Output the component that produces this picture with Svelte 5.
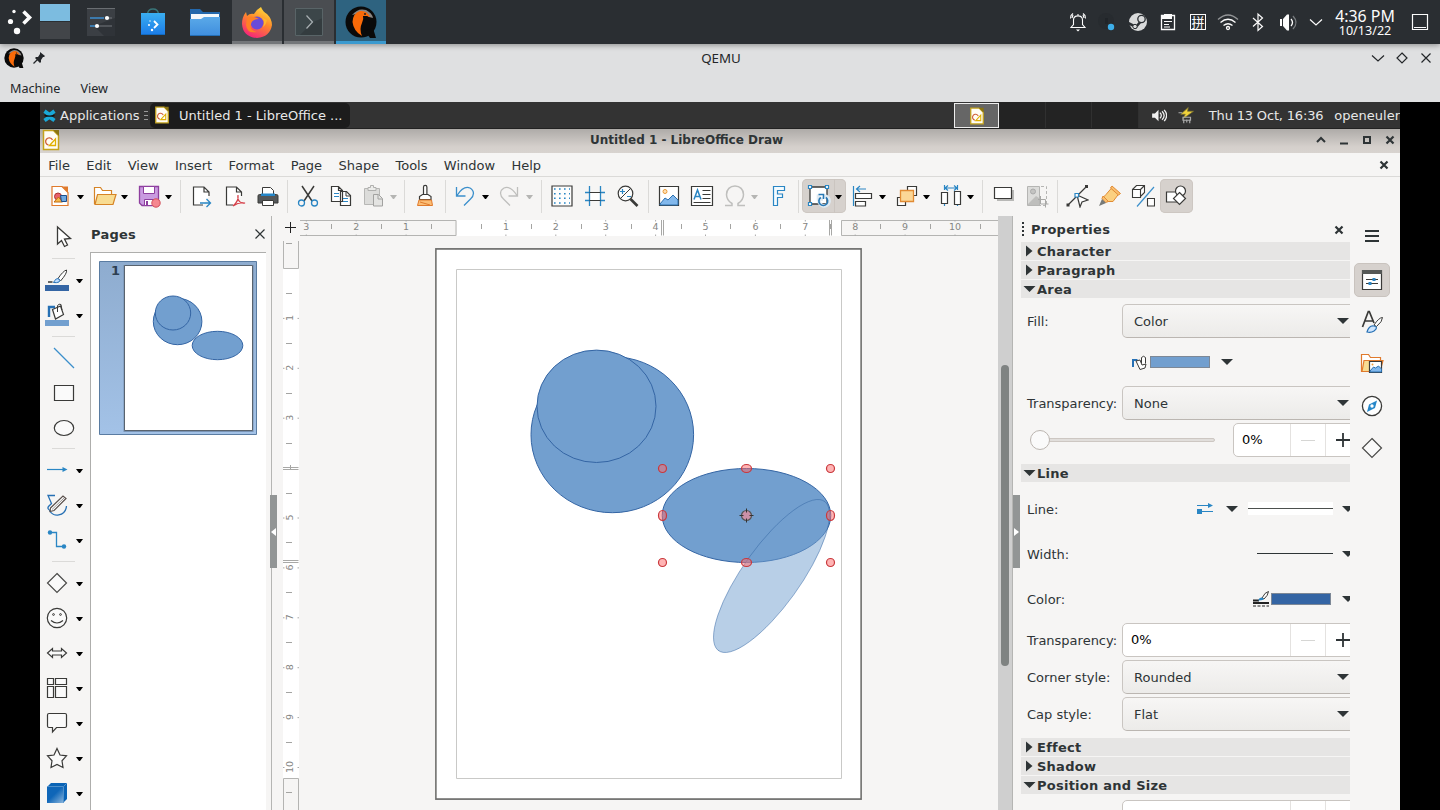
<script>
  const doc = '<path d="M4.500 2.500h10l5 5v14h-15z" fill="#fffdf5" stroke="#c4a21c" stroke-width="1.500"/><path d="M14 2h6v6z" fill="#8a7414"/><path d="M13.500 12a3.600 3.600 0 1 0-4 5" fill="none" stroke="#d0603a" stroke-width="1.300"/><path d="M10.500 17.500l6-6.500v6.500z" fill="none" stroke="#e0b000" stroke-width="1.300"/>';
  const qemu = '<circle cx="16" cy="16" r="15.500" fill="#0a0a0a"/><path d="M20 25l8-3 3 10h-6z" fill="#0a0a0a"/><path d="M7 9Q13 1.500 21 4q6 3 7 8l-4-1-5-5z" fill="#aaa5a0" opacity=".8"/><path d="M25 11Q22 4 15 5 8 7 7.500 16q1 9 9.500 14-3-7 0-13 2-4 1-7l4 0q2 1 3 1z" fill="#f96a08"/><circle cx="20" cy="8" r="1" fill="#222"/>';
  const icons = {
    doc, qemu,
    newdoc: '<path d="M3 2.500h10l6 6v13H3z" fill="#fff" stroke="#e07a2c" stroke-width="1.200"/><path d="M13 2.500h6v6z" fill="#e07a2c"/><circle cx="9" cy="12.500" r="3.500" fill="#e8616b" stroke="#a33" /><path d="M5 18l4.500-5 4 5z" fill="#f6b84c" stroke="#c06a10"/><path d="M11.500 11.500h6v6h-5z" fill="#6ea8e0" stroke="#1f4f8a"/>',
    open: '<path d="M1.500 20V3.500h6l2 3h9v4" fill="#fff" stroke="#d68426" stroke-width="1.200"/><path d="M4.500 10.500h18.500l-3 10H2z" fill="#f8dc92" stroke="#d68426" stroke-width="1.200"/>',
    save: '<path d="M2.500 2.500h19v19H5l-2.500-2.500z" fill="#c99be0" stroke="#8e3f9f" stroke-width="1.300"/><path d="M6.500 2.500h11v7h-11zM7.500 15.500h9v6h-9z" fill="#fff" stroke="#8e3f9f"/><path d="M9 17h2v4H9z" fill="#8e3f9f"/><circle cx="19" cy="19" r="4.200" fill="#f58790" stroke="#d24d58"/>',
    export: '<path d="M19 12V8l-5-5H3.500v18H13M14 3v5h5" fill="#fff" stroke="#3a3a38" stroke-width="1.200"/><path d="M10 19h10.500m-4-4l4 4-4 4" fill="none" stroke="#2a86c4" stroke-width="1.300"/>',
    pdf: '<path d="M18.500 12V8l-5-5H3.500v18H10M13.500 3v5h5" fill="#fff" stroke="#3a3a38" stroke-width="1.200"/><path d="M10 22q6-5 5-11c-1 6 3 9 7 8-5-1-9 1-12 3z" fill="none" stroke="#d6404a" stroke-width="1.200"/>',
    print: '<path d="M6.500 10V3.500h8l3 3V10" fill="#fff" stroke="#3a3a38"/><path d="M3.500 10.500h17q1.500 0 1.500 1.500v7H2v-7q0-1.500 1.500-1.500z" fill="#55585a" stroke="#3a3a38"/><path d="M5 9.500h14v2.500H5z" fill="#2687c9"/><path d="M6.500 16.500h11v5h-11z" fill="#fff" stroke="#3a3a38"/>',
    cut: '<path d="M6 2l10 15M18 2L8 17" stroke="#3a3a38" stroke-width="1.500"/><circle cx="5.500" cy="19" r="3" fill="none" stroke="#2a86c4" stroke-width="1.300"/><circle cx="18.500" cy="19" r="3" fill="none" stroke="#2a86c4" stroke-width="1.300"/>',
    copy: '<path d="M2.500 2.500h7l4 4v11h-11zM9.500 2.500v4h4M11.500 7.500h6l4 4v10h-10z" fill="#fff" stroke="#3a3a38" stroke-width="1.200"/><path d="M17 8v4h4" fill="none" stroke="#3a3a38"/><path d="M5 9.500h5m-5 3h5m4 2h5m-5 3h5" stroke="#2a86c4"/>',
    paste: '<path d="M2.500 4.500h15v16h-15z" fill="#dcdcda" stroke="#b7b7b5"/><path d="M6 6.500v-3h2.500v-2h3v2H14v3z" fill="#ececea" stroke="#b0b0ae"/><path d="M11.500 10.500h5l4 4v7.500h-9z" fill="#e4e4e2" stroke="#a2a2a0"/><path d="M16 11v4h4" fill="none" stroke="#a2a2a0"/>',
    brush: '<path d="M10.500 11V3a1.700 1.700 0 0 1 3.400 0v8" fill="#fff" stroke="#3a3a38" stroke-width="1.200"/><path d="M6.500 15.500v-3l3-2h5.500l3 2v3z" fill="#fff" stroke="#3a3a38" stroke-width="1.200"/><path d="M6 16h12.500l1 5.500H4.500z" fill="#fbbd75" stroke="#e07a2c"/><path d="M7 18l10 3" stroke="#e07a2c"/>',
    undo: '<path d="M3.500 3v9h9M4 11.500C7.500 6 12 2 17 4c5 3 4 8 .5 11l-6.500 6.500" fill="none" stroke="#3b8fcb" stroke-width="1.300"/>',
    redo: '<path d="M20.500 3v9h-9M20 11.500C16.500 6 12 2 7 4c-5 3-4 8-.5 11l6.500 6.500" fill="none" stroke="#bfbfbd" stroke-width="1.300"/>',
    grid: '<path d="M2 2h20v20H2z" fill="#fdfdfd" stroke="#3a3a38" stroke-width="1.200"/><g stroke="#2a86c4" stroke-width="1.600" stroke-dasharray="1.600 3.400"><path d="M4 5h16M4 9.700h16M4 14.300h16M4 19h16"/></g>',
    guides: '<path d="M6 9h12v7H6z" fill="#fff"/><path d="M6.500 2v20M17.500 2v20M2 8.500h4m12 0h4M2 16.500h4m12 0h4" stroke="#2a86c4" stroke-width="1.300"/><path d="M6.500 8.500h11m-11 8h11" stroke="#3a3a38" stroke-width="1.200"/>',
    zoom: '<circle cx="9.500" cy="9.500" r="7.300" fill="#fdfdfd" stroke="#3a3a38" stroke-width="1.200"/><path d="M4.500 14.500l10-10" stroke="#3a3a38"/><path d="M14.500 15l7 7" stroke="#3a3a38" stroke-width="2.600"/><path d="M4 7.500h5m-2.500-2.500v5m4.500 2.500h4" stroke="#2a86c4" stroke-width="1.200"/>',
    image: '<path d="M2.500 2.500h19v19h-19z" fill="#fff" stroke="#3a3a38" stroke-width="1.200"/><circle cx="8" cy="7.500" r="2" fill="#fde2b8" stroke="#ec9a36"/><path d="M3 20l5-6 3 2 5-5 5 5v5H3z" fill="#82b8ec" stroke="#2a70b0"/>',
    textbox: '<path d="M1.500 2.500h21v19h-21z" fill="#fff" stroke="#3a3a38" stroke-width="1.200"/><path d="M4 15.500L7.500 6l3.500 9.500M5 12.500h5" fill="none" stroke="#2a86c4" stroke-width="1.500"/><path d="M12.500 6.500h8m-8 4h8m-8 4h8m-17 4h17" stroke="#3a3a38"/>',
    omega: '<path d="M2 21.500h7v-2C5 17 3.500 14 3.500 10.500c0-5 3.500-8.500 8.500-8.500s8.500 3.500 8.500 8.500c0 3.500-1.500 6.500-5.500 9v2h7" fill="none" stroke="#bfbfbd" stroke-width="1.500"/>',
    fontwork: '<path d="M6.500 21.500V2.500h11v4h-7V10h5v3.500h-5v8z" fill="#f3fbff" stroke="#2a86c4" stroke-width="1.200"/>',
    rotate: '<path d="M3 3h17v17H3z" fill="#fff" stroke="#3a3a38" stroke-width="1.300"/><g fill="#fff" stroke="#2a86c4" stroke-width="1.200"><path d="M1.500 1.500h3v3h-3zM18.500 1.500h3v3h-3zM1.500 18.500h3v3h-3z"/></g><path d="M11.500 10.500v4.500h4.500M12.500 15a5 5 0 1 0 5-3" fill="none" stroke="#dfeaf2" stroke-width="3.600"/><path d="M11.500 10.500h5v4.500M13.800 13.500a4.400 4.400 0 1 0 5 0" fill="none" stroke="#2878b4" stroke-width="1.600"/>',
    align: '<path d="M2.500 2v20M15 5H5m4-3L5.500 5 9 8" fill="none" stroke="#2a86c4" stroke-width="1.200"/><path d="M4.500 9.500h16v5h-16zM4.500 17.500h10v4.500h-10z" fill="#fff" stroke="#3a3a38" stroke-width="1.200"/>',
    arrange: '<path d="M12.500 6V2.500h9v9H18M6 13.500H2.500v8h8V18" fill="#fff" stroke="#3a3a38" stroke-width="1.200"/><path d="M5.500 6.500h13v11h-13z" fill="#fbd797" stroke="#e18b34" stroke-width="1.300"/>',
    distribute: '<path d="M5.500 1v5M18.500 1v5M5.500 4h13M9 1.500L6 4l3 2.500M15 1.500L18 4l-3 2.500M5.500 20v2m13-2v2" fill="none" stroke="#2a86c4" stroke-width="1.200"/><path d="M2.500 8.500h6v11h-6zM15.500 7.500h6v13h-6z" fill="#fff" stroke="#3a3a38" stroke-width="1.200"/>',
    shadow: '<path d="M5 6h17v11H5z" fill="#b8b8b6"/><path d="M2.500 3.500h17v11h-17z" fill="#fff" stroke="#3a3a38" stroke-width="1.200"/>',
    crop: '<path d="M2.500 2.500h12v19h-12z" fill="#dcdcda" stroke="#b5b5b3"/><path d="M16 2.500h5.500v19H14" fill="none" stroke="#b5b5b3" stroke-dasharray="3 2"/><circle cx="8" cy="7.500" r="2.500" fill="#c3c3c1" stroke="#aaa"/><path d="M3 20l8-8 3 2v7H3z" fill="#bebebc"/><path d="M15.500 12v8h8M13 15.500h7.500v8" fill="none" stroke="#a8a8a6"/>',
    points: '<path d="M3 21L22 2M12 11l3 12 2-5 6-2z" fill="#fff" stroke="#3a3a38" stroke-width="1.200"/><path d="M1.500 19.500h3v3h-3zM20 1h3v3h-3z" fill="#3a3a38"/><path d="M10 9.500h3.500V13H10z" fill="#fff" stroke="#2a86c4" stroke-width="1.200"/>',
    marker: '<path d="M8 10.500l6-7 7 6-6 8-6 0-4-4z" fill="#fbd080" stroke="#e18b34"/><path d="M14 2l8.500 7.500-2 1.500L12.500 4zM5 12l5.500 5.500-3 1L4 14.500z" fill="#fac070" stroke="#e18b34"/><path d="M4 15l4 4-7 3z" fill="#777a78"/>',
    extrusion: '<path d="M1.500 5.500h8v8h-8zM1.500 5.500l4-4h8v7l-4 4M9.500 5.500l4-4M16.500 14.500h7v7.500h-7z" fill="#fff" stroke="#3a3a38" stroke-width="1.100"/><path d="M6 22.500L23 3" stroke="#3b8fcb" stroke-width="1.200"/>',
    drawfn: '<path d="M2.500 8h11v10h-11z" fill="#fff" stroke="#3a3a38" stroke-width="1.200"/><circle cx="16.500" cy="7" r="5" fill="#fff" stroke="#3a3a38" stroke-width="1.200"/><path d="M15.500 8.500l6 6-6 6-6-6z" fill="#fff" stroke="#3a3a38" stroke-width="1.200"/>',
    select: '<path d="M5.500 2v17l4-3.500 3 6 3-1.500-3-6 6-.5z" fill="#fff" stroke="#3a3a38" stroke-width="1.300"/>',
    linecolor: '<path d="M3 14h4.500" stroke="#3a3a38" stroke-width="1.500"/><path d="M13 10.500Q18 3 21.500 2q1 3-6 11z" fill="#fff" stroke="#3a3a38"/><path d="M8.500 14.500q2.500-5 5.500-3.500 1.500 1.500 0 3-2.500 1-5.500.5z" fill="#bcdcff" stroke="#2670b4"/><path d="M0 17h24v6H0z" fill="#3465a4"/>',
    fillcolor: '<path d="M4 14V4h6" fill="none" stroke="#2670b4" stroke-width="2.400"/><path d="M7.500 6.500l8-3.500 3 8.500-8 4.500z" fill="#fff" stroke="#3a3a38" stroke-width="1.200"/><path d="M12.500 9V2.500q1.500-2 3.500-1l1 5.500" fill="none" stroke="#3a3a38"/><path d="M0 17h24v6H0z" fill="#729fcf"/>',
    line: '<path d="M2 2l20 20" stroke="#3b8fcb" stroke-width="1.200"/>',
    rect: '<path d="M2.500 4.500h19v15h-19z" fill="#fafafa" stroke="#3a3a38" stroke-width="1.200"/>',
    ellipse: '<ellipse cx="12" cy="12" rx="9.700" ry="7.500" fill="#fafafa" stroke="#3a3a38" stroke-width="1.200"/>',
    arrow: '<path d="M2 11.500h17" stroke="#2a86c4" stroke-width="1.200"/><path d="M17.500 9l5 2.500-5 2.500z" fill="#2a86c4"/>',
    pen: '<path d="M10 2.500H3l3.500 8-3 3q-1.500 2 1 3.500" fill="none" stroke="#2670b4" stroke-width="1.300"/><path d="M4.500 17c3 8 16 6.500 17-4" fill="none" stroke="#2670b4" stroke-width="1.300"/><path d="M5.500 15L18 3l3 2.500L9 17.500l-4 1z" fill="#fff" stroke="#5a504c" stroke-width="1.200"/><path d="M7 16.500L19 5" stroke="#5a504c" stroke-width=".6"/>',
    connector: '<path d="M5 4.500h6.500v14H19" fill="none" stroke="#2a86c4" stroke-width="1.300"/><circle cx="5" cy="4.500" r="2.200" fill="#2a86c4"/><circle cx="19" cy="18.500" r="2.200" fill="#2a86c4"/>',
    diamond: '<path d="M12 2.500l9.500 9.500-9.500 9.500L2.500 12z" fill="#fafafa" stroke="#4a4a48" stroke-width="1.200"/>',
    smile: '<circle cx="12" cy="12" r="9.700" fill="#fafafa" stroke="#3a3a38" stroke-width="1.200"/><path d="M6 14.500q6 5 12 0" fill="none" stroke="#3a3a38" stroke-width="1.200"/><circle cx="8.500" cy="8.500" r=".9" fill="none" stroke="#3a3a38"/><circle cx="15.500" cy="8.500" r=".9" fill="none" stroke="#3a3a38"/>',
    arrows: '<path d="M2.500 12l5-4.500V10h9V7.500l5 4.500-5 4.500V14h-9v2.500z" fill="#fafafa" stroke="#3a3a38" stroke-width="1.200"/>',
    flow: '<path d="M2.500 2.500h6v6h-6zM10.500 2.500h11v6h-11zM2.500 10.500h6v11h-6zM10.500 10.500h11v11h-11z" fill="#fafafa" stroke="#3a3a38" stroke-width="1.200"/>',
    callout: '<path d="M4 2.500h16q1.500 0 1.500 1.500v11q0 1.500-1.500 1.500h-8.500l-4 4.500v-4.500H4q-1.500 0-1.500-1.500V4q0-1.500 1.500-1.500z" fill="#fafafa" stroke="#3a3a38" stroke-width="1.200"/>',
    star: '<path d="M12 2.500l3 6.500 6.500.8-4.500 5 1 6.700-6-3-6 3 1-6.700-4.500-5L9 9z" fill="#fafafa" stroke="#3a3a38" stroke-width="1.200"/>',
    cube: '<defs><linearGradient id="cg" x1="0" y1="0" x2="1" y2="1"><stop offset=".45" stop-color="#0f66b8"/><stop offset="1" stop-color="#8cb6dc"/></linearGradient></defs><path d="M2 6l4-4h16v16l-4 4H2z" fill="#0a63b5"/><path d="M2 6h16.500v16H2z" fill="url(#cg)"/><path d="M2.500 5.500h16v16M18.500 5.500L22 2" fill="none" stroke="#4e90cb"/>',
    menu: '<path d="M5 7h14M5 12h14M5 17h14" stroke="#2e3436" stroke-width="2"/>',
    props: '<path d="M2.500 2.500h19v19h-19z" fill="#fff" stroke="#3a3a38" stroke-width="1.200"/><path d="M2 2h20v4H2z" fill="#555856"/><path d="M6 11.500h12M6 15.500h12" stroke="#3a3a38"/><path d="M12.500 10h3v3h-3zM8.500 14h3v3h-3z" fill="#2a86c4"/>',
    styles: '<path d="M2.500 17L8.300 1.500h1L14 13M4.500 11h8" fill="none" stroke="#3a3a38" stroke-width="1.700"/><path d="M14 15q5-7.500 8.500-7.500 0 4-6 9z" fill="#fff" stroke="#3a3a38"/><path d="M7 22q2-7 7-6t0 5q-3 2-7 1z" fill="#cfe6ff" stroke="#2670b4" stroke-width="1.200"/>',
    gallery: '<path d="M1.500 20V2.500h7l2 3h10v4" fill="#fff" stroke="#e07a2c" stroke-width="1.200"/><path d="M4 8.500h19l-3 11H2z" fill="#f8dc92" stroke="#e07a2c" stroke-width="1.200"/><path d="M9.500 9.500h12v11h-12z" fill="#fff" stroke="#3a3a38" stroke-width="1.200"/><path d="M10 19l3.500-4 2 1 3-2 3 3v3H10z" fill="#82b8ec" stroke="#2a70b0"/><circle cx="12.500" cy="12.500" r="1" fill="#ec9a36"/>',
    navigator: '<circle cx="12" cy="12" r="9.600" fill="#fff" stroke="#3a3a38" stroke-width="1.300"/><path d="M17 6.500l-2 7.500-8 4 2-7.500z" fill="#2687c9"/><circle cx="12" cy="12" r="1.700" fill="#fff"/>',
    plus: '<path d="M6 12h14M13 5v14" stroke="#2e3436" stroke-width="1.800"/>',
    bell: '<path d="M5 17.500h14l-2.500-3V10c0-5.500-9-5.500-9 0v4.500zM12 5.500V4M6 8l1-3M18 8l-1-3M4.500 8.500l.5-3 2-2M19.500 8.500l-.5-3-2-2" fill="none" stroke="#fcfcfc" stroke-width="1.100"/><path d="M10 19.500h4l-2 2z" fill="#fff"/>',
    dot: '<circle cx="10" cy="11" r="8" fill="#272b2f"/><path d="M9 8h3v6H9z" fill="#202428"/><circle cx="15" cy="17" r="3.200" fill="#3daee9"/>',
    steam: '<circle cx="12" cy="12" r="9" fill="#d9dadb"/><path d="M2 13l8 4 6-7" fill="none" stroke="#2a2e32" stroke-width="2.600"/><circle cx="15.500" cy="9" r="3.700" fill="#d9dadb" stroke="#2a2e32" stroke-width="1.300"/><circle cx="9" cy="16.500" r="2.200" fill="#d9dadb" stroke="#2a2e32"/>',
    clipboard: '<path d="M5.500 5.500h13v14h-13z" fill="none" stroke="#fcfcfc" stroke-width="1.300"/><path d="M8 4h8v5H5V5h3z" fill="#fcfcfc"/><path d="M8 11.500h8m-8 3h5m-5 2.500h6" stroke="#fcfcfc" stroke-width="1.100"/>',
    wifi: '<g fill="none" stroke="#fcfcfc" stroke-width="1.300"><path d="M2 9.500Q12 .5 22 9.500" opacity=".5"/><path d="M4.500 12.500Q12 6 19.500 12.500M7.500 15.500Q12 12 16.500 15.500"/><circle cx="12" cy="18" r="1.500"/></g>',
    bluetooth: '<path d="M7 8l9.500 8.500-4.500 4V4l4.500 4L7 16.500" fill="none" stroke="#fcfcfc" stroke-width="1.200"/>',
    volume: '<path d="M4 9h2v7H4zM7 9l4-4.500h2v16h-2L7 16z" fill="#fcfcfc"/><path d="M15 9q3 3.500 0 7" fill="none" stroke="#fcfcfc" stroke-width="1.300"/><path d="M17 6q6 6.500 0 13" fill="none" stroke="#777b7e" stroke-width="1.300"/>',
    down: '<path d="M6 9.500l6 5.500 6-5.500" fill="none" stroke="currentColor" stroke-width="1.200"/>',
    desk: '<path d="M4.500 4.500h15v15h-15zM6 17.500h12" fill="none" stroke="#fcfcfc" stroke-width="1.200"/>',
    rhomb: '<path d="M12 7l5 5-5 5-5-5z" fill="none" stroke="currentColor" stroke-width="1.200"/>',
    close: '<path d="M7.500 7.500l9 9m0-9l-9 9" stroke="currentColor" stroke-width="1.200"/>',
    closebold: '<path d="M8.500 8.500l7 7m0-7l-7 7" stroke="currentColor" stroke-width="2.200"/>',
    up: '<path d="M8 14l4-4 4 4" fill="none" stroke="currentColor" stroke-width="2"/>',
    minus: '<path d="M8 15.500h8" stroke="currentColor" stroke-width="2"/>',
    max: '<path d="M9 9h6v6H9z" fill="none" stroke="currentColor" stroke-width="2"/>',
    xfce: '<path d="M4 5l7 5h2l7-5M4 20l7-5h2l7 5" fill="none" stroke="#1aa8d8" stroke-width="6"/><path d="M4 10.500q8 3 16 0v2.500l-3 1H7l-3-1z" fill="#101010"/>',
    gvol: '<path d="M3 9h4l5-5v16l-5-5H3z" fill="#f0f0f0"/><path d="M14 8q4 4 0 8M17 6q6 6 0 12M20 4q7 8 0 16" fill="none" stroke="#f0f0f0" stroke-width="1.800"/>',
    power: '<path d="M15 2L5 11h6l-3 6 14-10h-8z" fill="#f2d33b" stroke="#7e7430"/><path d="M8 15h10v4H8zM9 18v5m4-5v4m4-4v5M2 9h5" fill="none" stroke="#aaa" stroke-width="1.600"/>'
  };
  const sep = { sep: 1 };
  const wide = { sep: 1, wide: 1 };
  const toolbar = [
    { i: 'newdoc', a: 1 }, { i: 'open', a: 1 }, { i: 'save', a: 1 }, wide,
    { i: 'export' }, { i: 'pdf' }, { i: 'print' }, sep,
    { i: 'cut' }, { i: 'copy' }, { i: 'paste', a: 1, off: 1 }, sep,
    { i: 'brush' }, sep,
    { i: 'undo', a: 1 }, { i: 'redo', a: 1, off: 1 }, wide,
    { i: 'grid' }, { i: 'guides' }, { i: 'zoom' }, sep,
    { i: 'image' }, { i: 'textbox' }, { i: 'omega', a: 1, off: 1 }, { i: 'fontwork' }, sep,
    { i: 'rotate', a: 1, on: 1 }, { i: 'align', a: 1 }, { i: 'arrange', a: 1 }, { i: 'distribute', a: 1 }, wide,
    { i: 'shadow' }, { i: 'crop' }, sep,
    { i: 'points' }, { i: 'marker' }, { i: 'extrusion' }, { i: 'drawfn', on: 1 }
  ];
  const tools = [
    { i: 'select' }, sep, { i: 'linecolor', a: 1 }, { i: 'fillcolor', a: 1 }, sep,
    { i: 'line' }, { i: 'rect' }, { i: 'ellipse' }, sep,
    { i: 'arrow', a: 1 }, { i: 'pen', a: 1 }, { i: 'connector', a: 1 }, sep,
    { i: 'diamond', a: 1 }, { i: 'smile', a: 1 }, { i: 'arrows', a: 1 }, { i: 'flow', a: 1 },
    { i: 'callout', a: 1 }, { i: 'star', a: 1 }, { i: 'cube', a: 1 }
  ];
  const menus = ['File', 'Edit', 'View', 'Insert', 'Format', 'Page', 'Shape', 'Tools', 'Window', 'Help'];
  const step = 49.9;
  const range = (a, b) => Array.from({ length: b - a + 1 }, (_, k) => a + k);
  const handles = [[662.5, 468.5, 4], [746.5, 468.5, 5], [830.5, 468.5, 4], [662.5, 515.5, 4], [830.5, 515.5, 4], [662.5, 562.5, 4], [746.5, 562.5, 5], [830.5, 562.5, 4]];
</script>

{#snippet icon(name, size = 24, box = 24)}
  <svg width={size} height={size} viewBox="0 0 {box} {box}">{@html icons[name]}</svg>
{/snippet}

{#snippet tri(off)}
  <svg class="tri" class:off width="7" height="4" viewBox="0 0 7 4"><path d="M0 0h7L4 4H3z" /></svg>
{/snippet}

{#snippet caret()}
  <svg class="caret" width="12" height="6" viewBox="0 0 12 6"><path d="M0 0h12L6 6z" /></svg>
{/snippet}

{#snippet section(title, open)}
  <div class="section">
    <svg width="16" height="18" viewBox="0 0 16 18"><path d={open ? 'M2.500 6h12l-6 6z' : 'M5 3.500v11l6.500-5.500z'} /></svg>
    <b>{title}</b>
  </div>
{/snippet}

{#snippet combo(label, value)}
  <div class="row">
    <span class="label">{label}</span>
    <div class="combo"><span>{value}</span>{@render caret()}</div>
  </div>
{/snippet}

{#snippet spinButtons()}
  <i class="spin-minus"></i><i class="spin-plus">{@render icon('plus')}</i>
{/snippet}

<div class="screen">
  <header class="panel">
    <svg width="40" height="44" viewBox="0 0 40 44"><g fill="#fcfcfc"><circle cx="14" cy="11.500" r="1.700" /><circle cx="10.500" cy="21.500" r="2.600" /><circle cx="17" cy="31" r="3.200" /></g><path d="M23.500 11.500l6 6-6 6" fill="none" stroke="#fcfcfc" stroke-width="3.600" /></svg>
    <div class="pager"><i></i><i></i></div>
    <div class="launcher first">
      <svg width="28" height="28" viewBox="0 0 28 28"><path d="M0 0h28v28H0z" fill="#3b3f44" /><path d="M7 18l10 10h11V10z" fill="#24282b" opacity=".5" /><path d="M0 .5h28" stroke="#6a6e72" /><path d="M3 10h14M3 18h5" stroke="#3e8ed0" stroke-width="1.600" /><path d="M20 10h5M11 18h14" stroke="#75797c" stroke-width="1.200" /><circle cx="20" cy="10" r="2.100" fill="#fff" /><circle cx="10" cy="18" r="2.100" fill="#fff" /></svg>
    </div>
    <div class="launcher">
      <svg width="26" height="28" viewBox="0 0 26 28"><defs><linearGradient id="bag" x2="0" y2="1"><stop stop-color="#3aaef0" /><stop offset="1" stop-color="#1b7be8" /></linearGradient></defs><path d="M7.500 6Q8 1 13 1t5.500 5" fill="none" stroke="#39767a" stroke-width="1.400" /><path d="M1 5h24v22H1z" fill="url(#bag)" /><path d="M1 26h24v1H1z" fill="#126bc0" /><g fill="#fff"><circle cx="10" cy="13" r=".7" /><circle cx="9" cy="17" r="1" /><circle cx="12" cy="22" r="1.200" /></g><path d="M14 13l3.500 3.500L14 20" fill="none" stroke="#fff" stroke-width="1.800" /></svg>
    </div>
    <div class="launcher">
      <svg width="30" height="30" viewBox="0 0 30 30"><defs><linearGradient id="fold" x2="0" y2="1"><stop stop-color="#5aa9e8" /><stop offset="1" stop-color="#3f8ede" /></linearGradient></defs><path d="M0 2h10l3 3h17v8H0z" fill="#2468ac" /><path d="M1 7h28v9H1z" fill="#f4f8fb" /><path d="M0 12h11l3-2h16v19H0z" fill="url(#fold)" /><path d="M0 28h30v1H0z" fill="#236eb5" /></svg>
    </div>
    <div class="task">
      <svg width="32" height="32" viewBox="0 0 32 32"><defs><linearGradient id="fx" x1=".8" y1="0" x2=".3" y2="1"><stop stop-color="#ffe23d" /><stop offset=".45" stop-color="#ff8a2a" /><stop offset="1" stop-color="#f5217d" /></linearGradient></defs><path d="M20 1q2 5 6 7 5 5 5 11-2 12-15 13Q2 31 1 18 1 11 5 6l1 4q3-3 7-2 3-5 7-7z" fill="url(#fx)" /><circle cx="16" cy="17" r="6.500" fill="#6a4bd8" /><path d="M6 12q5-3 12 1-7 0-8 5-2 6 6 8-10 2-11-7z" fill="#ff8125" /><path d="M20 11q5 3 2 10 3-2 4-7z" fill="#ffb62e" /></svg>
    </div>
    <div class="task">
      <svg width="28" height="28" viewBox="0 0 28 28"><path d="M0 0h28v28H0z" fill="#3c4649" /><path d="M18 14L4 28h24V10z" fill="#2e3538" opacity=".6" /><path d="M.5.500h27v27H.5z" fill="none" stroke="#596467" /><path d="M11.500 7.500l6 6.500-6 6.500" fill="none" stroke="#a9b0b3" stroke-width="1.200" /></svg>
    </div>
    <div class="task active">{@render icon('qemu', 32, 32)}</div>
    <div class="tray">
      {@render icon('bell')}{@render icon('dot')}{@render icon('steam')}{@render icon('clipboard')}
      <span class="pin">拼</span>
      {@render icon('wifi')}{@render icon('bluetooth')}{@render icon('volume')}{@render icon('down')}
    </div>
    <div class="clock"><span>4:36 PM</span><small>10/13/22</small></div>
    <div class="deskbtn">{@render icon('desk')}</div>
  </header>

  <div class="host-title">
    <div class="side">
      {@render icon('qemu', 20, 32)}
      <svg width="12" height="12" viewBox="0 0 12 12"><path d="M7 0l5 4-1 1-1 0-2 3 0 2-1 1L2 6l1-1 2 0 2-3z" fill="#232629" /><path d="M5 7L.5 11.500" stroke="#232629" stroke-width="1.300" /></svg>
    </div>
    <span>QEMU</span>
    <div class="side right">{@render icon('down')}{@render icon('rhomb')}{@render icon('close')}</div>
  </div>
  <nav class="host-menu"><span>Machine</span><span>View</span></nav>

  <div class="guest">
    <div class="xpanel">
      <div class="apps">{@render icon('xfce', 15)}<span>Applications</span></div>
      <i class="grip"></i>
      <div class="xtask">{@render icon('doc', 20)}<span>Untitled 1 - LibreOffice ...</span></div>
      <div class="spaces"><i class="cur">{@render icon('doc', 20)}</i><i></i><i></i><i></i></div>
      <div class="xtray">{@render icon('gvol', 17)}{@render icon('power', 18)}</div>
      <span class="xclock">Thu 13 Oct, 16:36</span><span class="user">openeuler</span>
    </div>

    <div class="title">
      <div class="tleft">{@render icon('doc', 24)}</div>
      <b>Untitled 1 - LibreOffice Draw</b>
      <div class="wbtns">{@render icon('up')}{@render icon('minus')}{@render icon('max')}{@render icon('closebold')}</div>
    </div>

    <nav class="menu">
      {#each menus as m}<span>{m}</span>{/each}
      <div class="mclose">{@render icon('closebold')}</div>
    </nav>

    <div class="toolbar">
      {#each toolbar as t}
        {#if t.sep}
          <i class="vsep" class:wide={t.wide}></i>
        {:else}
          <div class="tb" class:on={t.on}>
            <span class="tbi">{@render icon(t.i)}</span>{#if t.a}<span class="tba">{@render tri(t.off)}</span>{/if}
          </div>
        {/if}
      {/each}
    </div>

    <main>
      <aside class="tools">
        {#each tools as t}
          {#if t.sep}<i class="hsep"></i>{:else}
            <div class="tool" class:single={!t.a}>{@render icon(t.i)}{#if t.a}{@render tri(false)}{/if}</div>
          {/if}
        {/each}
      </aside>

      <section class="pages">
        <div class="phead"><b>Pages</b>{@render icon('close')}</div>
        <div class="plist">
          <svg width="158" height="174" viewBox="99 261 158 174">
            <defs><linearGradient id="sel" x2="0" y2="1"><stop stop-color="#8eaccf" /><stop offset="1" stop-color="#a3c2e7" /></linearGradient></defs>
            <path d="M99.500 261.500h157v173h-157z" fill="url(#sel)" stroke="#5a7ca2" />
            <path d="M123.500 265h130v167h-130z" fill="#57708c" opacity=".55" />
            <path d="M124.500 265.500h128v165h-128z" fill="#fff" stroke="#59636e" />
            <text x="111" y="275" font-size="13" font-weight="bold" fill="#2e3f52">1</text>
            <g fill="#729fcf" stroke="#3465a4"><ellipse cx="177.600" cy="321.500" rx="24.300" ry="23.200" /><ellipse cx="173" cy="313" rx="17.700" ry="17" /><ellipse cx="217.500" cy="345.500" rx="25.300" ry="14.200" /></g>
          </svg>
        </div>
      </section>
      <div class="split"><i><svg width="7" height="73" viewBox="0 0 7 73"><path d="M6 33v8L1 37z" fill="#fff" /></svg></i></div>

      <section class="work">
        <svg class="ruler" width="715" height="25" viewBox="283 216 715 25">
          <path d="M290.500 222v11M285 227.500h11" stroke="#222" />
          <path d="M300 220.500h156v15h-156M998 220.500H841.500v15H998" fill="#f6f5f4" stroke="#b4b4b2" />
          <path d="M457 220h384v16H457z" fill="#fff" />
          {#each range(-3, 10) as n}
            {#if n !== 0}
              <path d="M{456 + n * step} 220v1.500M{456 + n * step} 234.500v1.500" stroke="#aaa" />
              <text x={456 + n * step} y="230" font-size="9.500" text-anchor="middle">{Math.abs(n)}</text>
            {/if}
            <path d="M{Math.round(456 + (n + 0.5) * step) + 0.5} 224v5" stroke="#a4a4a2" />
          {/each}
          <path d="M661.500 220v15.500M663.500 220v15.500M829.500 220v15.500M831.500 220v15.500" stroke="#a8a8a6" />
        </svg>
        <div class="lower">
          <svg class="ruler" width="17" height="569" viewBox="283 241 17 569">
            <path d="M283 268h16v511h-16z" fill="#fff" />
            <path d="M283.500 241v27.500h15V241M283.500 810v-31.500h15V810" fill="#f6f5f4" stroke="#b4b4b2" />
            {#each range(0, 10) as n}
              {#if n > 0 && n !== 4}
                <path d="M283 {268.500 + n * step}h1.500M297.500 {268.500 + n * step}h1.500" stroke="#aaa" />
                <text transform="translate(293 {268 + n * step}) rotate(-90)" font-size="9.500" text-anchor="middle">{n}</text>
              {/if}
              <path d="M286 {Math.round(268 + (n + 0.5) * step) + 0.5}h6" stroke="#a4a4a2" />
            {/each}
            <path d="M286 243.500h6M290.500 465v5" stroke="#a4a4a2" />
            <path d="M283 467.500h15.500M283 469.500h15.500M283 560.500h15.500M283 562.500h15.500" stroke="#a8a8a6" />
          </svg>
          <svg class="doc" width="698" height="569" viewBox="300 241 698 569">
            <path d="M435 248h427v552H435z" fill="#9a9a98" />
            <path d="M436 249h425v550H436z" fill="#fff" stroke="#6b6b69" stroke-width="1.300" />
            <path d="M456.500 269.500h385v509h-385z" fill="none" stroke="#c9c9c7" />
            <g fill="#729fcf" stroke="#3465a4">
              <ellipse cx="612.300" cy="434.700" rx="81.300" ry="78" />
              <ellipse cx="596.500" cy="406.300" rx="59.500" ry="56.200" />
              <ellipse cx="746.500" cy="515.500" rx="84.300" ry="47" />
            </g>
            <circle r="1" transform="matrix(58 -61.300 0 45.800 771.500 576)" fill="#729fcf" fill-opacity=".5" stroke="#3465a4" stroke-opacity=".5" vector-effect="non-scaling-stroke" />
            {#each handles as h}
              <ellipse cx={h[0]} cy={h[1]} rx={h[2]} ry={h[1] === 515.5 ? 5 : 4} fill="#ff6a6a" fill-opacity=".5" stroke="#c9383c" stroke-width="1.200" />
            {/each}
            <circle cx="746.500" cy="515.500" r="5" fill="#f08a96" fill-opacity=".7" stroke="#555" stroke-width="1.200" />
            <path d="M746.500 508.500v4M746.500 518.500v4M739.500 515.500h4M749.500 515.500h4" stroke="#333" />
          </svg>
        </div>
      </section>
      <div class="scroll"><i></i></div>
      <div class="rsplit"><i><svg width="7" height="73" viewBox="0 0 7 73"><path d="M1 33v8l5-4z" fill="#fff" /></svg></i></div>

      <section class="props">
        <div class="prophead"><i></i><b>Properties</b>{@render icon('closebold')}</div>
        {@render section('Character', false)}
        {@render section('Paragraph', false)}
        {@render section('Area', true)}
        <div class="area">
          {@render combo('Fill:', 'Color')}
          <div class="fillrow">
            <svg width="16" height="15" viewBox="0 0 16 15"><path d="M1 12V5h4.500" fill="none" stroke="#2670b4" stroke-width="2" /><path d="M4 6l4-1 2 5 4-1-1 4-5 1.500z" fill="#fff" stroke="#3a3a38" /><path d="M9.500 8V2.500q2-2.500 4 0v6" fill="#fff" stroke="#3a3a38" /></svg>
            <i class="swatch"></i>{@render caret()}
          </div>
          {@render combo('Transparency:', 'None')}
          <div class="sliderrow">
            <div class="slider"><i></i></div>
            <div class="spin small"><span>0%</span>{@render spinButtons()}</div>
          </div>
        </div>
        {@render section('Line', true)}
        <div class="linebody">
          <div class="lrow"><span class="label">Line:</span>
            <svg class="ends" width="16" height="12" viewBox="0 0 16 12"><path d="M0 2.500h14M0 8.500h16" stroke="#2a86c4" /><path d="M11 0l5 2.500-5 2.500zM0 6h5v5H0z" fill="#2a86c4" /></svg>
            {@render caret()}<i class="linebox"></i><i class="cut">{@render caret()}</i>
          </div>
          <div class="lrow"><span class="label">Width:</span><i class="widthline"></i><i class="cut">{@render caret()}</i></div>
          <div class="lrow"><span class="label">Color:</span>
            <svg class="penicon" width="17" height="16" viewBox="0 0 17 16"><path d="M0 9.500h6M0 12h16" stroke="#222" stroke-width="1.800" /><path d="M0 15h16" stroke="#222" stroke-dasharray="3 1.500" /><path d="M9 7q3-6 6.500-6.500-.5 4-4.500 7.500z" fill="#fff" stroke="#3a3a38" /><path d="M5 9.500q2-4.500 5-2.500t-5 2.500z" fill="#2a86c4" /></svg>
            <i class="swatch dark"></i><i class="cut">{@render caret()}</i>
          </div>
        </div>
        <div class="linefields">
          <div class="row"><span class="label">Transparency:</span><div class="spin"><span>0%</span>{@render spinButtons()}</div></div>
          {@render combo('Corner style:', 'Rounded')}
          {@render combo('Cap style:', 'Flat')}
        </div>
        {@render section('Effect', false)}
        {@render section('Shadow', false)}
        {@render section('Position and Size', true)}
        <div class="row last"><span class="label"></span><div class="spin">{@render spinButtons()}</div></div>
      </section>

      <aside class="tabs">
        <div>{@render icon('menu')}</div>
        <div class="on"><span>{@render icon('props')}</span></div>
        <div>{@render icon('styles')}</div>
        <div>{@render icon('gallery')}</div>
        <div>{@render icon('navigator')}</div>
        <div>{@render icon('diamond')}</div>
      </aside>
    </main>
  </div>
</div>

<style>
  :global(body) { margin: 0; overflow: hidden; background: #000; }
  .screen { width: 1440px; height: 810px; overflow: hidden; display: flex; flex-direction: column; background: #000; font-family: "Noto Sans", sans-serif; font-size: 13.33px; color: #232629; white-space: nowrap; }
  svg { display: block; flex: none; }
  i { font-style: normal; }

  .panel { height: 44px; flex: none; display: flex; align-items: center; background: #2a2e32; color: #fcfcfc; z-index: 1; box-shadow: 0 1px 6px rgba(0, 0, 0, .4); }
  .pager { width: 30px; display: flex; flex-direction: column; padding-bottom: 1px; }
  .pager i { height: 17px; background: #7cbce0; }
  .pager i + i { background: #424549; margin-top: 1px; }
  .launcher { width: 52px; height: 44px; display: grid; place-items: center; }
  .launcher.first { margin-left: 5px; }
  .task { box-sizing: border-box; width: 50px; height: 44px; display: grid; place-items: center; padding-top: 3px; background: #4a4d51; border-bottom: 3px solid #737679; margin-right: 2px; }
  .launcher + .task { margin-left: 1px; }
  .task.active { background: #2e6380; border-color: #3b9acf; }
  .tray { margin-left: auto; display: flex; align-items: center; gap: 6px; }
  .tray :global(svg:last-child) { margin-left: -2px; }
  .pin { box-sizing: border-box; width: 16px; height: 16px; margin: 0 4px; border: 1px solid #fcfcfc; font: 13px/13px "Noto Sans CJK SC", sans-serif; display: flex; justify-content: center; }
  .clock { width: 74px; display: flex; flex-direction: column; align-items: center; font-size: 15.900px; line-height: 16px; }
  .clock small { font-size: 12.600px; line-height: 13px; }
  .deskbtn { width: 44px; margin-right: -6px; padding-left: 6px; box-sizing: border-box; }

  .host-title { height: 29px; flex: none; box-sizing: border-box; padding: 0 2px 1px 0; background: #dfe0e1; display: flex; align-items: center; }
  .host-title .side { flex: 1 0 0; display: flex; align-items: center; gap: 9px; padding-left: 4px; box-sizing: border-box; }
  .host-title .right { justify-content: flex-end; gap: 0; padding: 0; }
  .host-menu { height: 29px; flex: none; box-sizing: border-box; background: #dfe0e1; display: flex; align-items: center; gap: 20px; padding: 2px 0 0 10px; font-size: 12.600px; }

  .guest { width: 1360px; height: 708px; flex: none; margin-left: 40px; overflow: hidden; display: flex; flex-direction: column; background: #f6f5f4; font-family: "DejaVu Sans", sans-serif; font-size: 13px; color: #2e3436; }
  .guest b { letter-spacing: .25px; }
  .xpanel { height: 26px; flex: none; display: flex; align-items: center; background: #333; color: #e8e8e8; border-bottom: 1px solid #222; }
  .apps { width: 103px; padding-left: 2px; box-sizing: border-box; display: flex; align-items: center; gap: 3px; }
  .grip { width: 4px; height: 9px; margin: 0 3px 0 1px; background: repeating-linear-gradient(#999 0 1px, transparent 1px 4px); }
  .xtask { box-sizing: border-box; width: 200px; height: 25px; padding-left: 2px; display: flex; align-items: center; gap: 7px; background: #1c1c1c; border-radius: 5px; margin-left: -1px; }
  .spaces { margin-left: auto; display: flex; height: 26px; }
  .spaces i { box-sizing: border-box; width: 46.500px; background: #232323; border-right: 1px solid #303030; }
  .spaces .cur { width: 45px; height: 25px; margin-top: 1px; display: grid; place-items: center; background: #666; border: 1px solid #eee; }
  .xtray { display: flex; align-items: center; gap: 10px; padding: 0 14px 0 11px; }
  .xclock { letter-spacing: -.17px; }
  .user { margin-left: 11px; }

  .title { height: 24px; flex: none; display: flex; align-items: center; background: linear-gradient(#aeaba8, #d5d0cc 75%, #d8d3cf); font-size: 12px; overflow: hidden; }
  .tleft { width: 551px; height: 24px; margin-left: -1px; flex: none; padding-bottom: 2px; }
  .title b { padding-bottom: 2px; letter-spacing: 0; }
  .wbtns { flex: 1; display: flex; justify-content: flex-end; padding-bottom: 3px; margin-right: -1px; }
  .wbtns :global(svg) { margin-right: -1px; }
  .menu { height: 23px; flex: none; display: flex; align-items: center; border-bottom: 1px solid #dbdad8; }
  .menu span { padding: 2px 8.170px 0; }
  .mclose { margin-left: auto; padding-right: 4px; }

  .toolbar { height: 39px; flex: none; box-sizing: border-box; padding: 0 0 1px 4px; display: flex; align-items: center; }
  .tb { height: 34px; box-sizing: border-box; display: flex; align-items: center; border-radius: 5px; }
  .tb.on { background: #d6d1cd; box-shadow: inset 0 0 0 1px #cdc7c2; }
  .tbi { width: 33px; display: grid; place-items: center; }
  .tba { width: 11px; height: 34px; display: grid; place-items: center start; padding-top: 2px; box-sizing: border-box; }
  .on .tba { box-shadow: -1px 0 #cbc5c0; }
  .tri { fill: #000; }
  .tri.off { fill: #b5b5b3; }
  .vsep { width: 7.300px; height: 33px; flex: none; background: linear-gradient(#dbdad8, #dbdad8) center / 1px 100% no-repeat; }
  .vsep.wide { width: 9px; }

  main { flex: 1; min-height: 0; display: flex; }
  .tools { width: 50px; padding-top: 3.500px; flex: none; box-sizing: border-box; display: flex; flex-direction: column; }
  .tool { height: 35px; flex: none; display: flex; align-items: center; gap: 7px; padding-left: 5px; }
  .tool .tri { margin-top: 2px; }
  .tool.single { padding-left: 12px; }
  .hsep { height: 7.800px; flex: none; margin-left: 12px; width: 23px; background: linear-gradient(#dbdad8, #dbdad8) center / 100% 1px no-repeat; }
  .pages { width: 176px; flex: none; display: flex; flex-direction: column; }
  .phead { height: 36px; flex: none; display: flex; align-items: center; justify-content: space-between; padding: 0 0 0 1px; margin-right: -6px; }
  .plist { flex: 1; background: #fff; border: solid #aeaeac; border-width: 1px 0 0 1px; padding: 8px; }
  .plist text { font-family: "DejaVu Sans", sans-serif; }
  .split { width: 17px; flex: none; background: linear-gradient(#b5b5b3, #b5b5b3) 5px 0 / 1px 100% no-repeat; }
  .split i, .rsplit i { display: block; width: 7px; height: 73px; margin: 279px 0 0 4px; background: #929595; }
  .work { width: 715px; flex: none; }
  .lower { display: flex; }
  .ruler text { font-family: "DejaVu Sans", sans-serif; fill: #858583; }
  .doc { background: #f6f5f4; }
  .scroll { width: 14px; flex: none; box-sizing: border-box; background: #cfcfcf; padding: 149px 3px 0; }
  .scroll i { display: block; height: 301px; width: 8px; border-radius: 4px; background: #7f8382; }
  .rsplit { width: 9px; flex: none; border-left: 1px solid #b5b5b3; margin-right: -1px; }
  .rsplit i { margin-left: 0; }

  .props { width: 329px; flex: none; overflow: hidden; display: flex; flex-direction: column; }
  .prophead { height: 26px; flex: none; display: flex; align-items: center; gap: 7px; padding-left: 1px; }
  .prophead i { width: 2px; height: 14px; background: repeating-linear-gradient(#2e3436 0 2px, transparent 2px 4px); }
  .prophead :global(svg) { margin: 2px -1px 0 auto; }
  .section { height: 18px; margin-bottom: 1px; flex: none; display: flex; align-items: center; background: #e6e5e4; fill: #2e3436; }
  .section + .area, .section + .linebody { margin-top: -1px; }
  .label { width: 101px; padding-left: 6px; box-sizing: border-box; flex: none; }
  .row { height: 34px; flex: none; display: flex; align-items: center; }
  .combo { box-sizing: border-box; width: 240px; height: 34px; flex: none; display: flex; align-items: center; justify-content: space-between; padding: 0 13px 0 11px; border: 1px solid #c9c5c1; border-bottom-color: #bbb6b1; border-radius: 5px; background: linear-gradient(#f7f6f5, #ecebe9); }
  .combo :global(svg) { margin-right: -1px; }
  .caret { fill: #2e3436; }
  .area { height: 166px; flex: none; padding-top: 6px; box-sizing: border-box; }
  .fillrow { height: 48px; display: flex; align-items: center; padding-left: 111px; gap: 2px; }
  .swatch { box-sizing: border-box; width: 60px; height: 12px; background: #729fcf; border: 1px solid #7d8896; }
  .fillrow .caret { margin-left: 9px; }
  .sliderrow { margin-top: 3px; height: 34px; display: flex; align-items: center; }
  .slider { width: 185px; height: 4px; margin: 0 18px 0 9px; box-sizing: border-box; border: 1px solid #cdc7c2; border-radius: 2px; background: #e1dedb; display: flex; align-items: center; flex: none; }
  .slider i { box-sizing: border-box; width: 20px; height: 20px; margin-left: -1px; border: 1px solid #bbb5b0; border-radius: 50%; background: #fafafa; flex: none; }
  .spin { box-sizing: border-box; width: 240px; height: 34px; flex: none; display: flex; align-items: center; border: 1px solid #c9c5c1; border-radius: 5px; background: #fff; color: #000; }
  .spin span { padding: 0 0 1px 8px; }
  .spin.small { width: 129px; }
  .spin-minus { width: 36px; height: 32px; margin-left: auto; box-sizing: border-box; border: solid #e4e2e0; border-width: 0 1px; background: linear-gradient(#d6d6d4, #d6d6d4) center / 14px 1px no-repeat; }
  .spin-plus { width: 35px; display: block; padding-left: 4px; box-sizing: border-box; }
  .linebody { padding-top: 4px; }
  .lrow { height: 45px; display: flex; align-items: center; }
  .lrow .label { margin-right: auto; padding-top: 2px; }
  .ends { margin-right: -1px; }
  .ends + .caret { margin: 0 10px 0 14px; }
  .linebox { width: 85px; height: 13px; background: linear-gradient(#4c504e, #4c504e) center / 100% 1px no-repeat, #fff; }
  .widthline { width: 76px; height: 1px; background: #2e3436; }
  .cut { width: 8px; overflow: hidden; margin-left: 9px; }
  .penicon { margin-right: 1px; }
  .swatch.dark { background: #3465a4; }
  .swatch.dark + .cut { margin-left: 11px; }
  .linefields { height: 115px; flex: none; margin-top: 2px; display: flex; flex-direction: column; gap: 3px; box-sizing: border-box; }
  .last { margin-top: 5px; }
  .tabs { width: 50px; flex: none; margin-top: -1px; }
  .tabs div { height: 42px; display: grid; place-items: center; padding-right: 6px; }
  .tabs .on { margin-top: 2px; }
  .tabs span { width: 34px; height: 32px; border: 1px solid #c9c3be; border-radius: 5px; background: #d6d1cd; display: grid; place-items: center; }
</style>
